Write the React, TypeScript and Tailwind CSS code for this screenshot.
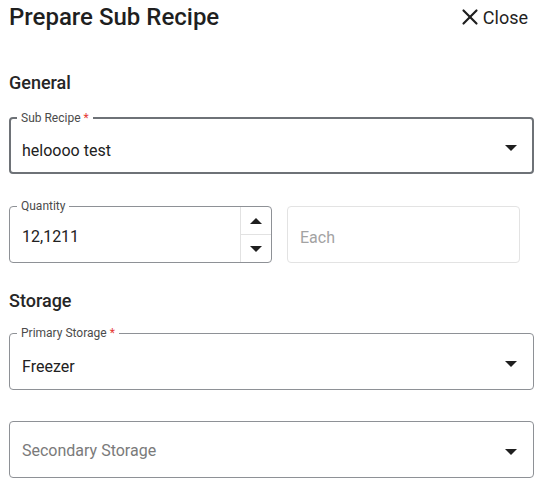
import { X } from 'lucide-react';

function Caret({ up = false, className = '' }: { up?: boolean; className?: string }) {
    return (
        <svg width="12" height="6" viewBox="0 0 12 6" className={`${up ? 'rotate-180' : ''} ${className}`}>
            <path d="M0 0h12L6 6z" fill="#1f1f1f" />
        </svg>
    );
}

function FloatLabel({ text, required, strong }: { text: string; required?: boolean; strong?: boolean }) {
    return (
        <span
            className={`absolute top-[-8px] bg-white px-[4px] text-[12px] leading-[14px] text-[#4b4b4b] ${
                strong ? 'left-[6px]' : 'left-[7px]'
            }`}
        >
            {text}
            {required && <span className="text-[#e53935]"> *</span>}
        </span>
    );
}

function SelectField({
    label,
    value,
    placeholder,
    required,
    strong,
}: {
    label?: string;
    value?: string;
    placeholder?: string;
    required?: boolean;
    strong?: boolean;
}) {
    return (
        <div
            className={`relative flex h-[57px] items-center justify-between rounded-[4px] ${
                strong ? 'border-2 border-[#6e7277] pl-[11px] pr-[15px]' : 'border border-[#8e9196] pl-[12px] pr-[16px]'
            }`}
        >
            {label && <FloatLabel text={label} required={required} strong={strong} />}
            {value ? (
                <span className="mt-[10px] text-[16px] text-[#212121]">{value}</span>
            ) : (
                <span className="mt-[3px] text-[16px] text-[#7a7a7a]">{placeholder}</span>
            )}
            <Caret className="mt-[5px]" />
        </div>
    );
}

export default function App() {
    return (
        <div className="w-[541px] bg-white font-['Roboto',sans-serif] text-[#212121]">
            <div className="flex h-[33px] items-center justify-between pl-[9px] pr-[13px] pt-[1px]">
                <h1 className="text-[24px] font-medium leading-8 text-[#1f1f1f]">Prepare Sub Recipe</h1>
                <button className="flex items-center text-[18px] text-[#1f1f1f]">
                    <X size={26} strokeWidth={2} className="-my-1" />
                    Close
                </button>
            </div>

            <div className="pl-[9px] pr-[7px]">
                <h2 className="mt-[38px] text-[18px] font-medium leading-6 text-[#262626]">General</h2>

                <div className="mt-[22px]">
                    <SelectField label="Sub Recipe" value="heloooo test" required strong />
                </div>

                <div className="mt-[32px] flex gap-[15px] pr-[14px]">
                    <div className="relative flex h-[57px] w-[263px] rounded-[4px] border border-[#8e9196]">
                        <FloatLabel text="Quantity" />
                        <div className="flex flex-1 items-center pl-[12px] pt-[5px] text-[16px] text-[#212121]">12,1211</div>
                        <div className="flex w-[31px] flex-col border-l border-[#e2e2e2]">
                            <div className="flex flex-1 items-center justify-center border-b border-[#e2e2e2] pt-[1px]">
                                <Caret up />
                            </div>
                            <div className="flex flex-1 items-center justify-center pt-[2px]">
                                <Caret />
                            </div>
                        </div>
                    </div>
                    <div className="flex h-[57px] flex-1 items-center rounded-[4px] border border-[#e3e3e3] pl-[12px] pt-[6px] text-[16px] text-[#a3a3a3]">
                        Each
                    </div>
                </div>

                <h2 className="mt-[26px] text-[18px] font-medium leading-6 text-[#262626]">Storage</h2>

                <div className="mt-[20px]">
                    <SelectField label="Primary Storage" value="Freezer" required />
                </div>

                <div className="mt-[31px] pb-[10px]">
                    <SelectField placeholder="Secondary Storage" />
                </div>
            </div>
        </div>
    );
}
